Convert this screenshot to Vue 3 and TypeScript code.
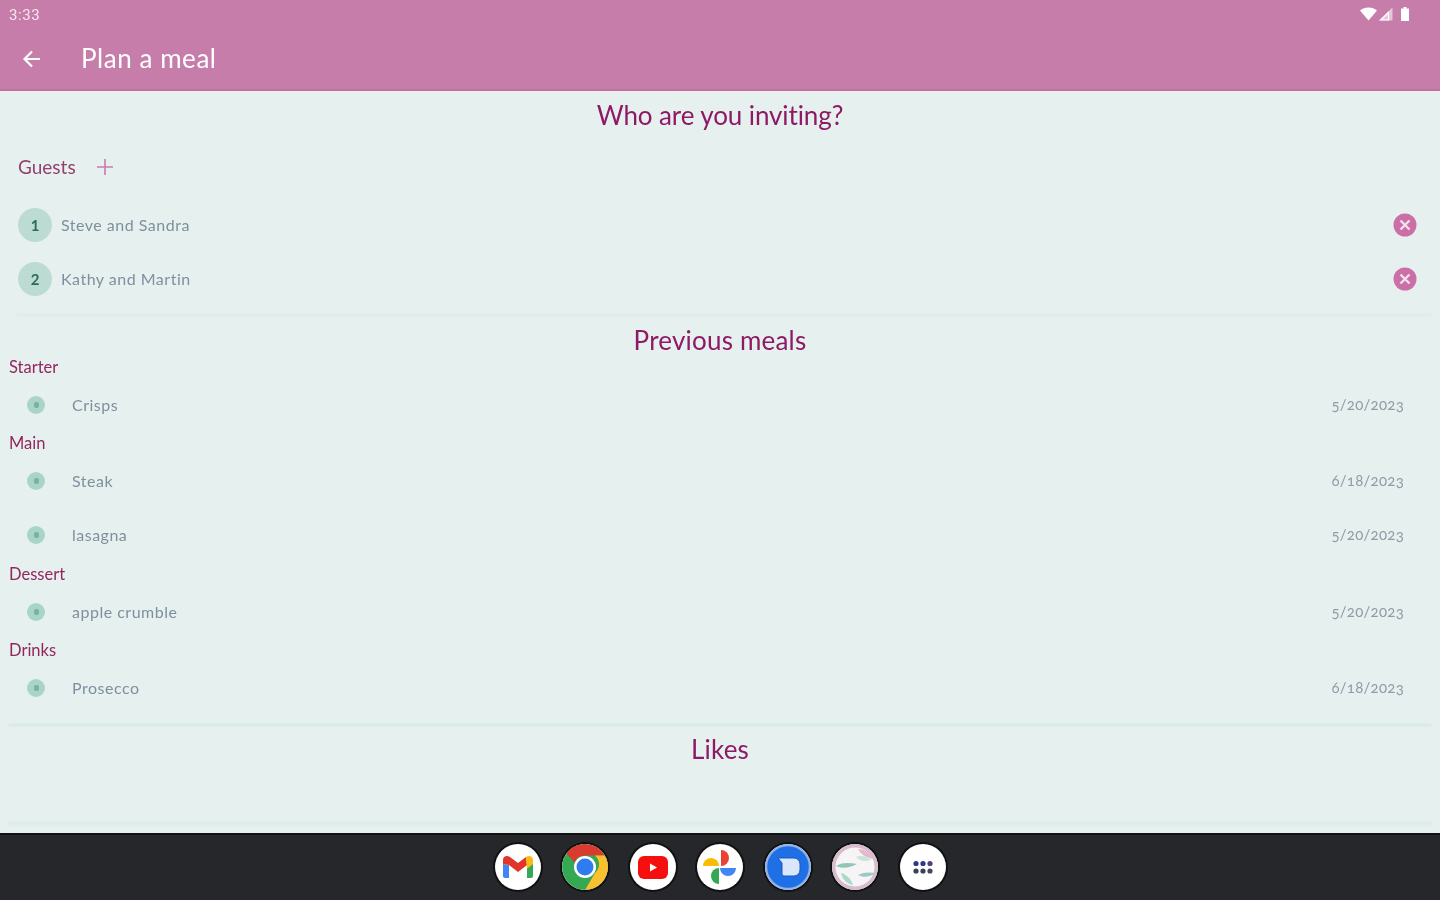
<script setup lang="ts">
interface Guest { id: number; name: string }
interface Meal { name: string; date: string }
interface Course { title: string; meals: Meal[] }

const guests: Guest[] = [
  { id: 1, name: 'Steve and Sandra' },
  { id: 2, name: 'Kathy and Martin' },
]

const courses: Course[] = [
  { title: 'Starter', meals: [{ name: 'Crisps', date: '5/20/2023' }] },
  {
    title: 'Main',
    meals: [
      { name: 'Steak', date: '6/18/2023' },
      { name: 'lasagna', date: '5/20/2023' },
    ],
  },
  { title: 'Dessert', meals: [{ name: 'apple crumble', date: '5/20/2023' }] },
  { title: 'Drinks', meals: [{ name: 'Prosecco', date: '6/18/2023' }] },
]
</script>

<template>
  <div class="screen">
    <header class="appbar">
      <div class="status">
        <span class="time">3:33</span>
        <div class="status-icons">
          <svg width="17" height="14" viewBox="0 0 17 14"><path d="M0 3.500C2.200 1.400 5.200.5 8.500.5s6.300.9 8.500 3L8.500 13.500z" fill="#fff" /></svg>
          <svg class="signal" width="15" height="14" viewBox="0 0 15 14"><path d="M14.500 .5v13H.5z" fill="#fff" fill-opacity=".55" /><path d="M10.500 5.500v7.500H3z" fill="none" stroke="#fff" stroke-width="1.200" /></svg>
          <svg width="10" height="14" viewBox="0 0 10 14"><path d="M3.500 0h3v1.500H9V14H1V1.500h2.500z" fill="#fff" /></svg>
        </div>
      </div>
      <div class="toolbar">
        <svg class="back" width="24" height="24" viewBox="0 0 24 24"><path d="M20 12H5M12 4.500 4.500 12l7.500 7.500" fill="none" stroke="#fff" stroke-width="2.200" /></svg>
        <h1>Plan a meal</h1>
      </div>
    </header>

    <main class="content">
      <h2 class="heading first">Who are you inviting?</h2>

      <div class="guests-head">
        <span class="label">Guests</span>
        <svg width="18" height="18" viewBox="0 0 18 18"><path d="M9 1v16M1 9h16" stroke="#c77daa" stroke-width="1.600" fill="none" /></svg>
      </div>

      <ul class="guests">
        <li v-for="g in guests" :key="g.id" class="guest">
          <span class="num">{{ g.id }}</span>
          <span class="name">{{ g.name }}</span>
          <svg class="remove" width="24" height="24" viewBox="0 0 24 24">
            <circle cx="12" cy="12" r="11.500" fill="#cb6fa6" />
            <path d="m7.500 7.500 9 9m0-9-9 9" stroke="#f1e3ec" stroke-width="2.400" />
          </svg>
        </li>
      </ul>

      <div class="rule guests-rule"></div>
      <h2 class="heading">Previous meals</h2>

      <section v-for="c in courses" :key="c.title" class="course">
        <h3>{{ c.title }}</h3>
        <div v-for="m in c.meals" :key="m.name" class="meal">
          <span class="dot"><i></i></span>
          <span class="name">{{ m.name }}</span>
          <span class="date">{{ m.date }}</span>
        </div>
      </section>

      <div class="rule meals-rule"></div>
      <h2 class="heading">Likes</h2>
      <div class="likes"></div>
      <div class="rule likes-rule"></div>
    </main>

    <footer class="dock">
      <!-- Gmail -->
      <span class="app">
        <svg viewBox="0 0 46 46" width="46" height="46">
          <path d="M8 20v12a2 2 0 0 0 2 2h4V21z" fill="#4285f4" />
          <path d="M32 21v13h4a2 2 0 0 0 2-2V20z" fill="#34a853" />
          <path d="M8 20v-4c0-4 4-5 7-3l8 6 8-6 1 8-9 7-9-7z" fill="#e3342b" />
          <path d="M31 13c3-2 7-1 7 3v4l-6 5z" fill="#f9bc15" />
        </svg>
      </span>
      <!-- Chrome -->
      <span class="app">
        <svg viewBox="0 0 46 46" width="46" height="46">
          <circle cx="23" cy="23" r="23" fill="#34a853" />
          <path d="M23 0a23 23 0 0 1 20 11.500H23a11.500 11.500 0 0 0-10.500 7L4 9A23 23 0 0 1 23 0z" fill="#db3a2e" />
          <path d="M43 11.500A23 23 0 0 1 23 46l10-17a11.500 11.500 0 0 0 0-17.500z" fill="#fbc02d" />
          <circle cx="23" cy="23" r="11" fill="#fff" />
          <circle cx="23" cy="23" r="8.500" fill="#2f7cf0" />
        </svg>
      </span>
      <!-- YouTube -->
      <span class="app">
        <svg viewBox="0 0 46 46" width="46" height="46">
          <rect x="8" y="12" width="30" height="23" rx="6" fill="#f50f0f" />
          <path d="m20 19.500 7 4-7 4z" fill="#fff" />
        </svg>
      </span>
      <!-- Photos -->
      <span class="app">
        <svg viewBox="0 0 46 46" width="46" height="46">
          <path d="M24 22V6a8 8 0 0 1 0 16z" fill="#ea4335" />
          <path d="M23 24h16a8 8 0 0 1-16 0z" fill="#4285f4" />
          <path d="M22 24v16a8 8 0 0 1 0-16z" fill="#34a853" />
          <path d="M22 22H6a8 8 0 0 1 16 0z" fill="#fbbc04" />
        </svg>
      </span>
      <!-- Messages -->
      <span class="app">
        <svg viewBox="0 0 46 46" width="46" height="46">
          <circle cx="23" cy="23" r="22" fill="#1f6fe6" stroke="#8fb2e6" stroke-width="2.500" />
          <path d="M13 14h16a6 6 0 0 1 6 6v6a6 6 0 0 1-6 6H19a2 2 0 0 1-2-2V19z" fill="#d9e6fb" stroke="#1a5bc0" stroke-width="1" />
        </svg>
      </span>
      <!-- meal app -->
      <span class="app">
        <svg viewBox="0 0 46 46" width="46" height="46">
          <circle cx="23" cy="23" r="21.500" fill="#f6f4f5" stroke="#d6bccd" stroke-width="4" />
          <path d="M26 5c6 0 13 4 15 10-6-1-12-4-15-10z" fill="#e6b8d0" />
          <path d="M4 22c7-4 14-3 21-2-7 4-15 5-21 2z" fill="#8fc8ba" />
          <path d="M26 31c5-3 11-3 17-2-4 4-12 5-17 2z" fill="#9cc8ca" />
          <path d="M9 29c5 1 10 6 12 12-6-1-11-6-12-12z" fill="#a9dacb" />
          <path d="M24 13c5-2 10-1 15 3-6 2-11 1-15-3z" fill="#c5e4da" />
        </svg>
      </span>
      <!-- launcher -->
      <span class="app">
        <svg viewBox="0 0 46 46" width="46" height="46">
          <circle cx="16" cy="19.500" r="2.600" fill="#2b3a8c" />
          <circle cx="23" cy="19.500" r="2.600" fill="#2b3a8c" />
          <circle cx="30" cy="19.500" r="2.600" fill="#5a3f78" />
          <circle cx="16" cy="27" r="2.600" fill="#3b4256" />
          <circle cx="23" cy="27" r="2.600" fill="#3b4256" />
          <circle cx="30" cy="27" r="2.600" fill="#4a4456" />
        </svg>
      </span>
    </footer>
  </div>
</template>

<style scoped>
.screen {
  width: 1440px;
  height: 900px;
  display: flex;
  flex-direction: column;
  overflow: hidden;
  background: #e6f1ef;
  font-family: Lato, "Open Sans", sans-serif;
}

.appbar {
  height: 91px;
  flex: none;
  background: #c77daa;
  border-bottom: 2px solid #c26fa1;
  box-sizing: border-box;
  color: #fff;
}

.status {
  height: 28px;
  display: flex;
  align-items: center;
  justify-content: space-between;
  padding: 0 30px 0 9px;
}

.time {
  margin-top: 2px;
  font: 15px "Roboto", sans-serif;
  letter-spacing: 0.6px;
  color: #f6e6ef;
  filter: blur(0.6px);
}

.status-icons {
  display: flex;
  align-items: center;
  gap: 1px;
  filter: blur(0.6px);
}

.signal {
  margin-right: 6px;
}

.toolbar {
  height: 61px;
  display: flex;
  align-items: center;
  padding-left: 20px;
}

.toolbar h1 {
  margin: 0 0 2px 37px;
  font-size: 26px;
  font-weight: 400;
  letter-spacing: 0.55px;
  filter: blur(0.5px);
}

.content {
  flex: 1;
  min-height: 0;
  display: flex;
  flex-direction: column;
}

.heading {
  height: 30px;
  margin: 0;
  font-size: 26px;
  line-height: 28px;
  font-weight: 400;
  letter-spacing: 0.2px;
  text-align: center;
  color: #8e1a66;
  filter: blur(0.5px);
}

.heading.first {
  margin-top: 10px;
  letter-spacing: -0.1px;
}

.guests-head {
  height: 44px;
  margin-top: 14px;
  padding-left: 18px;
  display: flex;
  align-items: center;
  gap: 20px;
}

.label {
  margin-bottom: 2px;
  font-size: 19px;
  color: #93406f;
  filter: blur(0.6px);
}

.guests {
  list-style: none;
  margin: 9px 0 0;
  padding: 0 23px 0 18px;
}

.guest {
  height: 54px;
  display: flex;
  align-items: center;
}

.num {
  width: 34px;
  height: 34px;
  flex: none;
  border-radius: 50%;
  background: #bcdcd3;
  color: #2a6b5c;
  font-size: 15px;
  font-weight: 700;
  line-height: 34px;
  text-align: center;
  filter: blur(0.5px);
}

.name {
  margin-bottom: 2px;
  font-size: 16px;
  letter-spacing: 0.5px;
  color: #7f8f9e;
  filter: blur(0.7px);
}

.guest .name {
  margin-left: 9px;
}

.remove {
  margin-left: auto;
  filter: blur(0.5px);
}

.rule {
  height: 2px;
  background: #d9eae6;
  filter: blur(1px);
}

.guests-rule {
  margin: 8px 8px 10px 16px;
}

.course {
  display: flex;
  flex-direction: column;
}

.course:nth-of-type(3) {
  margin-top: 1px;
}

.course h3 {
  height: 22px;
  margin: 0;
  padding-left: 9px;
  font-size: 16.500px;
  line-height: 23px;
  font-weight: 400;
  color: #93265f;
  filter: blur(0.5px);
}

.meal {
  height: 54px;
  display: flex;
  align-items: center;
  padding: 0 36px 0 27px;
}

.dot {
  width: 18px;
  height: 18px;
  flex: none;
  border-radius: 50%;
  background: #a9d5c8;
  display: flex;
  align-items: center;
  justify-content: center;
  filter: blur(0.6px);
}

.dot i {
  width: 5px;
  height: 6px;
  background: #7bb0a2;
  border-radius: 2px;
}

.meal .name {
  margin-left: 27px;
}

.date {
  margin: 0 0 2px auto;
  font-size: 15px;
  letter-spacing: 0.25px;
  font-variant-numeric: oldstyle-nums;
  color: #8f9ba6;
  filter: blur(0.7px);
}

.meals-rule {
  margin: 9px 8px 9px 8px;
  background: #d2e6e1;
}

.likes {
  height: 57px;
}

.likes-rule {
  height: 5px;
  margin: -1px 8px 0;
  background: #deece9;
}

.dock {
  height: 67px;
  flex: none;
  margin-top: auto;
  padding-bottom: 2px;
  background: #26272b;
  border-top: 2px solid #111;
  box-sizing: border-box;
  display: flex;
  align-items: center;
  justify-content: center;
  gap: 21.500px;
}

.app {
  width: 46px;
  height: 46px;
  border-radius: 50%;
  background: #fff;
  overflow: hidden;
  box-shadow: 0 0 0 2px #111;
  filter: blur(0.6px);
}

.app svg {
  display: block;
}
</style>
